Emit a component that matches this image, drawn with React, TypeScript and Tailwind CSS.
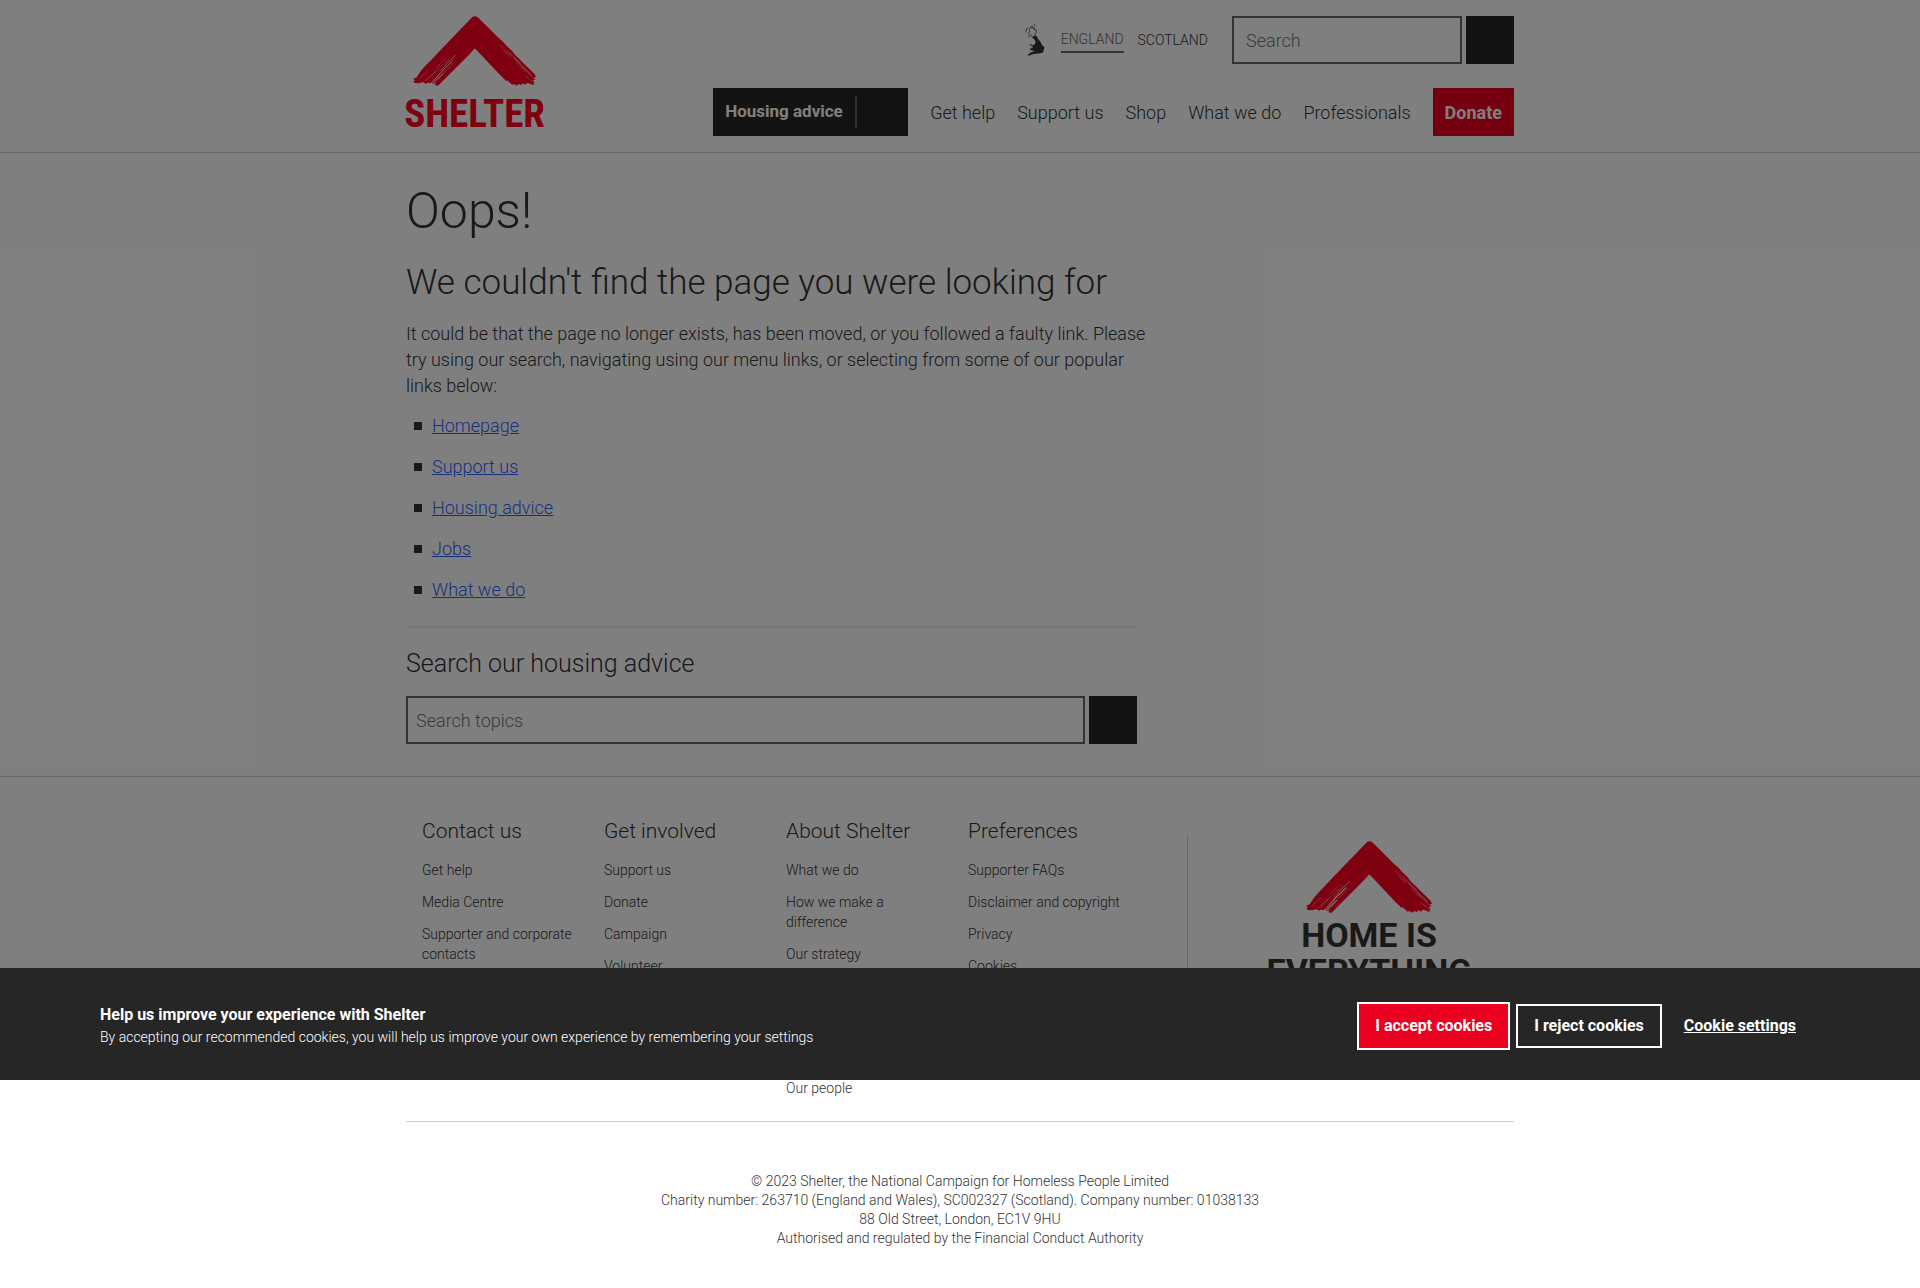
import React from "react";

const navLinks = ["Get help", "Support us", "Shop", "What we do", "Professionals"];
const popularLinks = ["Homepage", "Support us", "Housing advice", "Jobs", "What we do"];

const footerColumns = [
  { title: "Contact us", links: ["Get help", "Media Centre", "Supporter and corporate contacts"] },
  { title: "Get involved", links: ["Support us", "Donate", "Campaign", "Volunteer"] },
  { title: "About Shelter", links: ["What we do", "How we make a difference", "Our strategy"], last: "Our people" },
  { title: "Preferences", links: ["Supporter FAQs", "Disclaimer and copyright", "Privacy", "Cookies"] },
];

function Roof({ className }: { className: string }) {
  return (
    <svg viewBox="68 47 370 212" className={className} preserveAspectRatio="none" aria-hidden="true">
      <path
        fill="#ff0021"
        d="M254 48 Q260 47 265 53 L325 113 L338 124 L352 140 L366 153 L376 166 L391 180 L400 190 L413 202 L424 213 L433 222 L438 232 L431 234 L437 240 L428 240 L434 250 L430 251 L432 257 L420 252 L410 249 L407 255 L398 251 L394 256 L386 253 L380 258 L372 253 L366 255 L360 249 L354 246 L357 243 L347 243 L341 236 L330 226 L254 145 L236 165 L143 258 L133 257 L139 248 L128 254 L126 246 L119 251 L113 249 L106 252 L97 247 L88 251 L73 250 L69 246 L73 243 L69 236 L78 234 L92 213 L108 195 L122 181 L146 155 L243 54 Q248 48 254 48 Z"
      />
      <g stroke="#fff" strokeWidth="1.2" fill="none" strokeLinecap="round">
        <path d="M196 166 L172 189 L150 214" strokeWidth="2" />
        <path d="M186 184 L154 216 L128 245" strokeWidth="3" />
        <path d="M176 178 L140 212 L112 240" />
        <path d="M166 176 L138 204" />
        <path d="M192 188 L168 212 L142 240" />
        <path d="M158 222 L130 249" strokeWidth="3" />
        <path d="M136 215 L104 244" />
        <path d="M112 214 L86 238" />
        <path d="M330 134 L352 157 L364 167" />
        <path d="M341 152 L362 172" />
        <path d="M352 150 L378 178 L392 190" />
        <path d="M370 172 L398 200 L424 225" strokeWidth="2" />
        <path d="M378 188 L406 216" />
        <path d="M396 200 L430 236" />
        <path d="M404 226 L430 250" />
      </g>
    </svg>
  );
}

function UkMap() {
  return (
    <svg viewBox="0 0 60 96" className="h-8 w-5" aria-hidden="true">
      <path
        fill="#333"
        d="M25 36 L34 35 L40 46 L47 54 L51 64 L58 68 L57 76 L54 82 L56 85 L46 88 L34 89 L22 91 L12 95 L8 93 L16 86 L23 83 L30 81 L18 79 L15 74 L24 71 L22 65 L29 61 L32 54 L28 46 L22 42 Z"
      />
      <g fill="none" stroke="#444" strokeWidth="2.4">
        <path d="M12 20 L16 10 L22 7 L20 12 L29 10 L26 16 L34 18 L33 26 L28 32 L33 35 L24 40 L19 37 L14 30 L10 27 L15 22 Z" />
        <path d="M29 1 L27 6 M8 10 L3 19 L2 25 M13 63 L21 62 L22 70 L14 77 M10 34 L12 40" />
      </g>
    </svg>
  );
}

export default function App() {
  return (
    <div className="relative bg-white font-[Roboto,'Liberation_Sans',sans-serif] font-light text-[#333]">
      <header className="border-b border-[#ccc]">
        <div className="mx-auto flex h-38 max-w-[1108px] justify-between py-4">
          <a href="#" aria-label="Shelter home" className="flex w-[137px] flex-col items-center">
            <Roof className="h-[70px] w-[123px]" />
            <span className="mt-2 font-['Roboto_Condensed','Liberation_Sans_Narrow',sans-serif] text-[39px] leading-10 font-bold text-[#ff0021]">SHELTER</span>
          </a>
          <div className="flex flex-col items-end gap-6">
            <div className="flex h-12 items-center">
              <UkMap />
              <a href="#" className="mt-0.5 ml-4 border-b-2 border-[#666] pb-0.5 text-[14px] leading-5 text-[#666]">ENGLAND</a>
              <a href="#" className="ml-[14px] text-[14px] leading-5">SCOTLAND</a>
              <form className="ml-6 flex gap-1" onSubmit={(e) => e.preventDefault()}>
                <input aria-label="Search" placeholder="Search" className="h-12 w-[230px] border-2 border-[#666] px-3 text-[18px] placeholder:text-[#757575]" />
                <button type="submit" aria-label="Search" className="size-12 bg-[#262626]" />
              </form>
            </div>
            <nav className="flex h-12 items-center gap-[22px] text-[18px]">
              <a href="#" className="flex h-12 w-[195px] items-center gap-3 bg-[#262626] pl-3 text-[17px] font-bold text-white">
                Housing advice
                <span className="h-8 w-0.5 bg-[#666]" />
              </a>
              {navLinks.map((label) => (
                <a key={label} href="#">{label}</a>
              ))}
              <a href="#" className="flex h-12 items-center bg-[#eb0020] px-3 font-bold text-white">Donate</a>
            </nav>
          </div>
        </div>
      </header>

      <main className="mx-auto max-w-[1108px] pt-7 pb-8">
        <div className="max-w-[731px]">
          <h1 className="text-[50px] leading-[60px]">Oops!</h1>
          <h2 className="mt-4 text-[35px] leading-[52px]">We couldn't find the page you were looking for</h2>
          <p className="mt-3 -mr-3 text-[18px] leading-[26px]">
            It could be that the page no longer exists, has been moved, or you followed a faulty link. Please try using our search, navigating using our menu links, or selecting from some of our popular links below:
          </p>
          <ul className="mt-[14px] flex flex-col gap-4 pl-2">
            {popularLinks.map((label) => (
              <li key={label} className="flex items-center gap-[10px] text-[18px] leading-[25px]">
                <span className="size-2 bg-[#333]" />
                <a href="#" className="text-[#2f5fff] underline">{label}</a>
              </li>
            ))}
          </ul>
          <hr className="mt-6 border-t-2 border-[#eee]" />
          <h3 className="mt-[18px] text-[25px] leading-9">
            <label htmlFor="topics">Search our housing advice</label>
          </h3>
          <form className="mt-[14px] flex gap-1" onSubmit={(e) => e.preventDefault()}>
            <input id="topics" placeholder="Search topics" className="h-12 min-w-0 flex-1 border-2 border-[#666] px-2 text-[18px] placeholder:text-[#757575]" />
            <button type="submit" aria-label="Search topics" className="size-12 bg-[#262626]" />
          </form>
        </div>
      </main>

      <footer className="border-t border-[#ccc] pt-10">
        <div className="mx-auto max-w-[1108px]">
          <div className="flex min-h-[305px] border-b border-[#ccc]">
            {footerColumns.map((column) => (
              <section key={column.title} className="w-[182px] px-4">
                <h4 className="text-[21px] leading-7">{column.title}</h4>
                <ul className="mt-[15px] -mr-2 flex flex-col gap-3 text-[14px] leading-5">
                  {column.links.map((label) => (
                    <li key={label} className={label.startsWith("How") ? "pr-8" : ""}><a href="#">{label}</a></li>
                  ))}
                  {column.last && <li className="pt-[102px]"><a href="#">{column.last}</a></li>}
                </ul>
              </section>
            ))}
            <div className="mt-[18px] mb-12 ml-[53px] flex flex-1 flex-col items-center border-l border-[#ccc] pt-1.5 pl-9">
              <Roof className="h-[72px] w-[126px]" />
              <p className="mt-1 text-center text-[34px] leading-9 font-bold">HOME IS<br />EVERYTHING</p>
            </div>
          </div>
          <div className="pt-[50px] pb-10 text-center text-[14px] leading-[19px]">
            <p>© 2023 Shelter, the National Campaign for Homeless People Limited</p>
            <p>Charity number: 263710 (England and Wales), SC002327 (Scotland). Company number: 01038133</p>
            <p>88 Old Street, London, EC1V 9HU</p>
            <p>Authorised and regulated by the Financial Conduct Authority</p>
          </div>
        </div>
      </footer>

      <div className="absolute inset-x-0 top-0 flex h-[1080px] flex-col justify-end bg-black/50">
        <section aria-label="Cookies" className="flex h-28 items-center justify-between bg-[#262626] pt-1 pr-[104px] pl-[100px] text-white">
          <div className="leading-[22px]">
            <h2 className="text-[16px] font-bold">Help us improve your experience with Shelter</h2>
            <p className="text-[14px]">By accepting our recommended cookies, you will help us improve your own experience by remembering your settings</p>
          </div>
          <div className="flex items-center gap-[6px] text-[16px] font-bold">
            <button type="button" className="h-12 border-2 border-white bg-[#eb0020] px-4">I accept cookies</button>
            <button type="button" className="h-11 border-2 border-white px-4">I reject cookies</button>
            <button type="button" className="h-11 pr-5 pl-4 underline">Cookie settings</button>
          </div>
        </section>
      </div>
    </div>
  );
}
